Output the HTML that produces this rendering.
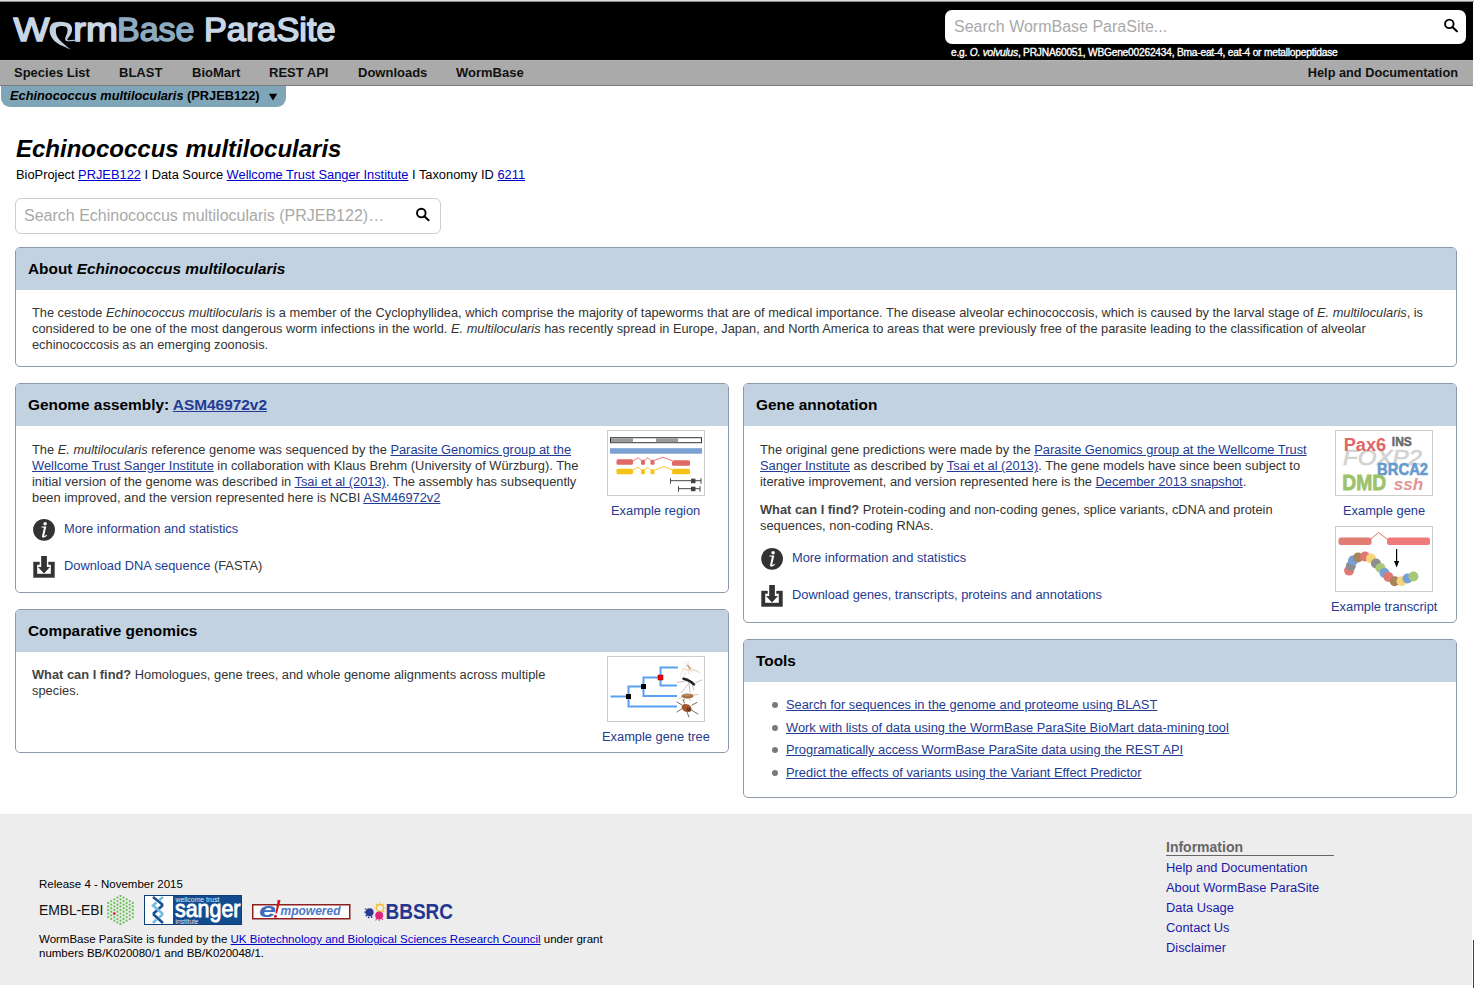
<!DOCTYPE html>
<html><head><meta charset="utf-8">
<style>
*{margin:0;padding:0;box-sizing:border-box}
html,body{width:1474px;height:988px;overflow:hidden;background:#fff}
body{font-family:"Liberation Sans",sans-serif;color:#000;position:relative}
.abs{position:absolute;white-space:nowrap}
a{color:#233b92;text-decoration:underline}
#topstrip{position:absolute;left:0;top:0;width:1474px;height:2px;background:linear-gradient(#dedddb 0,#dedddb 50%,#8c8c8c 50%,#8c8c8c 100%)}
#hdr{position:absolute;left:0;top:2px;width:1473px;height:58px;background:#000}
#nav{position:absolute;left:0;top:60px;width:1473px;height:26px;background:#aaa;border-top:1px solid #b4b4b4;border-bottom:1px solid #7a7a7a}
.nv{position:absolute;top:3.5px;font-weight:bold;font-size:13px;color:#111;line-height:16px}
#tab{position:absolute;left:1px;top:86px;width:285px;height:21px;background:#7fa5b9;border-radius:0 0 9px 9px}
#tab span.t{position:absolute;left:9px;top:2px;font-weight:bold;font-size:12.8px;line-height:16px;color:#000;white-space:nowrap}
.panel{position:absolute;border:1px solid #8c9aab;border-radius:5px;background:#fff;overflow:hidden}
.ph{height:42px;background:#c2d2e1;font-weight:bold;font-size:15.4px;line-height:42px;padding-left:12px;color:#000;white-space:nowrap}
.pb{font-size:12.8px;line-height:16px;color:#333}
.pb p{white-space:nowrap}
.txt{position:absolute;white-space:nowrap;font-size:12.85px;line-height:16px;color:#333}
.txt b{color:#454545}
.lk{position:absolute;white-space:nowrap;font-size:12.85px;line-height:16px;text-decoration:none}
.nu{text-decoration:none}
.ico{position:absolute}
.imgbox{position:absolute;width:98px;height:66px;border:1px solid #cdcdcd;background:#fff}
.li{position:absolute;left:786px;white-space:nowrap;font-size:12.85px;line-height:16px}
.ft{position:absolute;white-space:nowrap;font-size:11.5px;line-height:14px;color:#000}
.fl{position:absolute;left:1166px;white-space:nowrap;font-size:12.85px;line-height:16px;color:#1a1aa8}
.bul{position:absolute;left:-14.5px;top:4.5px;width:6px;height:6px;border-radius:50%;background:#7a7a7a}
</style></head><body>
<div id="topstrip"></div>
<div id="hdr"></div>
<svg style="position:absolute;left:0;top:0" width="350" height="60" viewBox="0 0 350 60">
 <defs><linearGradient id="wg" x1="0" y1="0" x2="1" y2="1"><stop offset="0" stop-color="#b5c8d8"/><stop offset="0.45" stop-color="#ccd9e5"/><stop offset="1" stop-color="#93adc2"/></linearGradient></defs>
 <g font-family="Liberation Sans" font-size="32.5" stroke-linejoin="round" stroke-linecap="round" stroke-width="1.5">
  <text x="13.5" y="41" fill="#c8d7e7" stroke="#c8d7e7" textLength="36" lengthAdjust="spacingAndGlyphs">W</text>
  <text x="73.2" y="41" fill="#c8d7e7" stroke="#c8d7e7" textLength="44.7" lengthAdjust="spacingAndGlyphs">rm</text>
  <text x="117" y="41" fill="#8eaac0" stroke="#8eaac0" textLength="77.5" lengthAdjust="spacingAndGlyphs">Base</text>
  <text x="204" y="41" fill="#c8d7e7" stroke="#c8d7e7" textLength="131.5" lengthAdjust="spacingAndGlyphs">ParaSite</text>
 </g>
 <path d="M70.8,49.7 C68,48.5 64,46.5 61.5,45.5 C57,43.5 52.5,40 50.5,35 C48.8,31 49.3,25 53.5,22.8 C59,21.2 67,21.5 70.5,24.8 C73.5,28.5 72,34 68.5,37.5 C67.2,38.8 66.8,40 68.2,40.2 C71,40.5 74,38.8 77.2,40.6 L76.8,41.2 C73.5,40.3 70.5,41.6 67.2,41.2 C65,40.8 64.6,38.6 65.8,36.4 C67.6,33 68.4,29 66.4,27 C63,25.3 59,25.8 56.3,27.8 C55.3,30.5 55.8,35 58,38 C61,42 66,45.5 70.8,49.7 Z" fill="url(#wg)"/>
</svg>
<div style="position:absolute;left:945px;top:10px;width:521px;height:33.5px;background:#fff;border-radius:7px"></div>
<div class="abs" style="left:954px;top:18px;font-size:16px;line-height:18px;color:#a9a9a9">Search WormBase ParaSite...</div>
<svg style="position:absolute;left:1441px;top:17px" width="18" height="18" viewBox="0 0 18 18"><circle cx="8.3" cy="6.9" r="4.25" fill="none" stroke="#000" stroke-width="1.9"/><path d="M11.4,10 L15.9,14.2" stroke="#000" stroke-width="2.1" stroke-linecap="round"/></svg>
<div class="abs" style="left:951px;top:47px;font-size:10.2px;line-height:12px;color:#fff;letter-spacing:-0.21px;-webkit-text-stroke:0.35px #fff">e.g. <i>O. volvulus</i>, PRJNA60051, WBGene00262434, Bma-eat-4, eat-4 or metallopeptidase</div>
<div id="nav">
  <span class="nv" style="left:14px">Species List</span>
  <span class="nv" style="left:119px">BLAST</span>
  <span class="nv" style="left:192px">BioMart</span>
  <span class="nv" style="left:269px">REST API</span>
  <span class="nv" style="left:358px">Downloads</span>
  <span class="nv" style="left:456px">WormBase</span>
  <span class="nv" style="right:15px;font-size:12.75px">Help and Documentation</span>
</div>
<div id="tab"><span class="t"><i>Echinococcus multilocularis</i> (PRJEB122)</span><svg style="position:absolute;left:267px;top:7px" width="10" height="8"><polygon points="0.8,0.8 9.2,0.8 5,7.6" fill="#000"/></svg></div>

<div class="abs" style="left:16px;top:134px;font-size:24px;font-weight:bold;font-style:italic;line-height:30px">Echinococcus multilocularis</div>
<div class="abs" style="left:16px;top:167px;font-size:12.85px;line-height:16px;color:#000">BioProject <a style="color:#0000cc" href="#">PRJEB122</a> I Data Source <a style="color:#0000cc" href="#">Wellcome Trust Sanger Institute</a> I Taxonomy ID <a style="color:#0000cc" href="#">6211</a></div>

<div style="position:absolute;left:15px;top:198px;width:426px;height:36px;border:1px solid #cfcfcf;border-radius:6px;background:#fff"></div>
<div class="abs" style="left:24px;top:207px;font-size:16px;line-height:18px;color:#a9a9a9">Search Echinococcus multilocularis (PRJEB122)…</div>
<svg style="position:absolute;left:413px;top:205px" width="18" height="18" viewBox="0 0 18 18"><circle cx="8.3" cy="8" r="4.3" fill="none" stroke="#000" stroke-width="1.9"/><path d="M11.3,11.2 L15.6,15.2" stroke="#000" stroke-width="2" stroke-linecap="round"/></svg>
<!-- About -->
<div class="panel" style="left:15px;top:247px;width:1442px;height:120px">
  <div class="ph">About <i>Echinococcus multilocularis</i></div>
  <div class="pb" style="padding:15px 0 0 16px">
   <p>The cestode <i>Echinococcus multilocularis</i> is a member of the Cyclophyllidea, which comprise the majority of tapeworms that are of medical importance. The disease alveolar echinococcosis, which is caused by the larval stage of <i>E. multilocularis</i>, is</p>
   <p>considered to be one of the most dangerous worm infections in the world. <i>E. multilocularis</i> has recently spread in Europe, Japan, and North America to areas that were previously free of the parasite leading to the classification of alveolar</p>
   <p>echinococcosis as an emerging zoonosis.</p>
  </div>
</div>

<!-- Genome assembly -->
<div class="panel" style="left:15px;top:383px;width:714px;height:210px">
  <div class="ph">Genome assembly: <a href="#">ASM46972v2</a></div>
</div>

<!-- Gene annotation -->
<div class="panel" style="left:743px;top:383px;width:714px;height:240px">
  <div class="ph">Gene annotation</div>
</div>

<!-- Comparative genomics -->
<div class="panel" style="left:15px;top:609px;width:714px;height:144px">
  <div class="ph">Comparative genomics</div>
</div>

<!-- Tools -->
<div class="panel" style="left:743px;top:639px;width:714px;height:159px">
  <div class="ph">Tools</div>
</div>

<!-- ===== Genome assembly content ===== -->
<div class="txt" style="left:32px;top:442px">The <i>E. multilocularis</i> reference genome was sequenced by the <a href="#">Parasite Genomics group at the</a><br><a href="#">Wellcome Trust Sanger Institute</a> in collaboration with Klaus Brehm (University of Würzburg). The<br>initial version of the genome was described in <a href="#">Tsai et al (2013)</a>. The assembly has subsequently<br>been improved, and the version represented here is NCBI <a href="#">ASM46972v2</a></div>
<div class="imgbox" style="left:607px;top:430px">
 <svg width="96" height="64" viewBox="1 0.8 96 64">
  <rect x="3.5" y="7.5" width="91" height="5" fill="#fff" stroke="#333" stroke-width="1"/>
  <rect x="4" y="8" width="22" height="4" fill="#999"/><rect x="49" y="8" width="22" height="4" fill="#999"/>
  <rect x="3" y="18" width="92" height="5.5" fill="#7ba0d2"/>
  <g fill="#e06a66"><rect x="9.5" y="29" width="16.5" height="5.5" rx="1.5"/><rect x="34" y="29.5" width="4" height="5" rx="1"/><rect x="43.5" y="29.5" width="4" height="5" rx="1"/><rect x="65" y="30" width="18" height="5.5" rx="1.5"/></g>
  <path d="M26,31 L31,27.5 L34,30 M38,30 L41,27.5 L43.5,30 M47.5,30 L56,27 L65,30.5" fill="none" stroke="#e06a66" stroke-width="0.9"/>
  <g fill="#f5c316"><rect x="9.5" y="38.5" width="16.5" height="5.5" rx="1.5"/><rect x="34" y="39" width="4" height="5" rx="1"/><rect x="43.5" y="39" width="4" height="5" rx="1"/><rect x="65" y="38.5" width="18" height="5.5" rx="1.5"/></g>
  <path d="M26,40 L31,37 L34,39.5 M38,39.5 L41,37 L43.5,39.5 M47.5,40 L57,36.5 L65,39.5" fill="none" stroke="#f5c316" stroke-width="0.9"/>
  <g fill="#444" stroke="#444"><path d="M63,50.5 L94,50.5" stroke-width="1"/><rect x="63" y="48" width="1" height="5.5" stroke="none"/><rect x="93.5" y="48" width="1" height="5.5" stroke="none"/><rect x="84" y="48.5" width="4.5" height="4.5" stroke="none"/>
  <path d="M71,58.5 L93,58.5" stroke-width="1"/><rect x="71" y="56" width="1" height="5.5" stroke="none"/><rect x="92.5" y="56" width="1" height="5.5" stroke="none"/><rect x="84" y="56.5" width="4.5" height="4.5" stroke="none"/></g>
 </svg>
</div>
<a class="lk" style="left:611px;top:503px" href="#">Example region</a>
<svg class="ico" style="left:32px;top:518px" width="24" height="24" viewBox="0 0 24 24"><circle cx="12.05" cy="11.8" r="10.9" fill="#333"/><circle cx="13.1" cy="5.8" r="1.75" fill="#fff"/><path d="M9.6,8.5 L14.3,8.5 L12.3,17.2 C12.1,18.1 12.7,18.3 14.9,16.8 L15.1,17.5 C13.6,19 11.9,19.8 10.9,19.6 C10.1,19.4 9.9,18.7 10.1,17.8 L11.8,10.4 C11.9,9.8 11.4,9.5 9.4,9.6 Z" fill="#fff"/></svg>
<a class="lk nu" style="left:64px;top:521px" href="#">More information and statistics</a>
<svg class="ico" style="left:32px;top:555px" width="24" height="24" viewBox="0 0 24 24"><path d="M1.5,7 L7.5,7 L7.5,9.6 L5,9.6 L5,19 L19,19 L19,9.6 L16.5,9.6 L16.5,7 L22.5,7 L22.5,22.5 L1.5,22.5 Z" fill="#333" stroke="#333" stroke-width="0.4" stroke-linejoin="round"/><rect x="9.2" y="1" width="5.7" height="11" fill="#333"/><path d="M6,12 L18,12 L12,18.5 Z" fill="#333"/></svg>
<div class="txt" style="left:64px;top:558px"><a class="nu" href="#">Download DNA sequence</a> (FASTA)</div>

<!-- ===== Gene annotation content ===== -->
<div class="txt" style="left:760px;top:442px">The original gene predictions were made by the <a href="#">Parasite Genomics group at the Wellcome Trust</a><br><a href="#">Sanger Institute</a> as described by <a href="#">Tsai et al (2013)</a>. The gene models have since been subject to<br>iterative improvement, and version represented here is the <a href="#">December 2013 snapshot</a>.</div>
<div class="txt" style="left:760px;top:502px"><b>What can I find?</b> Protein-coding and non-coding genes, splice variants, cDNA and protein<br>sequences, non-coding RNAs.</div>
<svg class="ico" style="left:760px;top:547px" width="24" height="24" viewBox="0 0 24 24"><circle cx="12.05" cy="11.8" r="10.9" fill="#333"/><circle cx="13.1" cy="5.8" r="1.75" fill="#fff"/><path d="M9.6,8.5 L14.3,8.5 L12.3,17.2 C12.1,18.1 12.7,18.3 14.9,16.8 L15.1,17.5 C13.6,19 11.9,19.8 10.9,19.6 C10.1,19.4 9.9,18.7 10.1,17.8 L11.8,10.4 C11.9,9.8 11.4,9.5 9.4,9.6 Z" fill="#fff"/></svg>
<a class="lk nu" style="left:792px;top:550px" href="#">More information and statistics</a>
<svg class="ico" style="left:760px;top:584px" width="24" height="24" viewBox="0 0 24 24"><path d="M1.5,7 L7.5,7 L7.5,9.6 L5,9.6 L5,19 L19,19 L19,9.6 L16.5,9.6 L16.5,7 L22.5,7 L22.5,22.5 L1.5,22.5 Z" fill="#333" stroke="#333" stroke-width="0.4" stroke-linejoin="round"/><rect x="9.2" y="1" width="5.7" height="11" fill="#333"/><path d="M6,12 L18,12 L12,18.5 Z" fill="#333"/></svg>
<a class="lk nu" style="left:792px;top:587px" href="#">Download genes, transcripts, proteins and annotations</a>
<div class="imgbox" style="left:1335px;top:430px">
 <svg width="96" height="64" viewBox="0 0 96 64" font-family="Liberation Sans">
  <text x="7" y="33.5" font-size="22.5" font-style="italic" fill="#d2d2d2" stroke="#d2d2d2" stroke-width="0.7" textLength="79" lengthAdjust="spacingAndGlyphs">FOXP2</text>
  <text x="7.7" y="19.8" font-size="17.5" font-weight="bold" fill="#e06666" textLength="42.5" lengthAdjust="spacingAndGlyphs">Pax6</text>
  <text x="55.8" y="14.7" font-size="13.4" font-weight="bold" fill="#6a6a6a" stroke="#6a6a6a" stroke-width="0.5" textLength="20" lengthAdjust="spacingAndGlyphs">INS</text>
  <text x="41.1" y="43.6" font-size="17" font-weight="bold" fill="#6699cc" stroke="#6699cc" stroke-width="0.6" textLength="51" lengthAdjust="spacingAndGlyphs">BRCA2</text>
  <text x="6.2" y="58.8" font-size="22.5" font-weight="bold" fill="#9dc36b" stroke="#9dc36b" stroke-width="0.8" textLength="44" lengthAdjust="spacingAndGlyphs">DMD</text>
  <text x="57.8" y="58.8" font-size="16" font-weight="bold" font-style="italic" fill="#e39494" textLength="29.5" lengthAdjust="spacingAndGlyphs">ssh</text>
 </svg>
</div>
<a class="lk" style="left:1343px;top:503px" href="#">Example gene</a>
<div class="imgbox" style="left:1335px;top:526px">
 <svg width="96" height="64" viewBox="0 0 96 64">
  <rect x="2.5" y="10.5" width="33" height="7.5" rx="2.5" fill="#e07c74"/>
  <rect x="51" y="10.5" width="43" height="7.5" rx="2.5" fill="#f07a7a"/>
  <path d="M35,12 L42.5,5.5 L51,12" fill="none" stroke="#e07068" stroke-width="1"/>
  <path d="M60.6,22 L60.6,38" stroke="#000" stroke-width="1.2"/><path d="M58,34 L63.2,34 L60.6,40.5 Z" fill="#000"/>
  <g>
   <circle cx="13.1" cy="43.6" r="5" fill="#e07872"/>
   <circle cx="14.8" cy="39" r="5" fill="#8e8e8e"/>
   <circle cx="17" cy="33.5" r="5" fill="#76a0d8"/>
   <circle cx="22" cy="30.5" r="5" fill="#a8835e"/>
   <circle cx="29" cy="29.5" r="5" fill="#e07872"/>
   <circle cx="35" cy="31.5" r="5" fill="#f5d47a"/>
   <circle cx="40" cy="36.5" r="5" fill="#8e8e8e"/>
   <circle cx="44.5" cy="41" r="5" fill="#a8c878"/>
   <circle cx="48.5" cy="46" r="5" fill="#76a0d8"/>
   <circle cx="52.5" cy="50" r="5" fill="#e07872"/>
   <circle cx="58.7" cy="54.2" r="5" fill="#a8835e"/>
   <circle cx="65.5" cy="54.2" r="5" fill="#f5d47a"/>
   <circle cx="71.5" cy="51.5" r="5" fill="#76a0d8"/>
   <circle cx="77.5" cy="49.5" r="5" fill="#a8c878"/>
  </g>
 </svg>
</div>
<a class="lk" style="left:1331px;top:599px" href="#">Example transcript</a>

<!-- ===== Comparative content ===== -->
<div class="txt" style="left:32px;top:667px"><b>What can I find?</b> Homologues, gene trees, and whole genome alignments across multiple<br>species.</div>
<div class="imgbox" style="left:607px;top:656px">
 <svg width="96" height="64" viewBox="0 0 96 64">
  <g fill="none" stroke="#5aa0f0" stroke-width="2">
   <path d="M2.5,39.5 L20.5,39.5"/>
   <path d="M36,29.5 L20.5,29.5 L20.5,49.5 L69,49.5"/>
   <path d="M52.5,20.5 L35.5,20.5 L35.5,39 L69,39"/>
   <path d="M70,10.5 L52.5,10.5 L52.5,28.5 L69,28.5"/>
  </g>
  <rect x="18" y="37" width="5" height="5" fill="#000"/>
  <rect x="33" y="27" width="5" height="5" fill="#000"/>
  <rect x="50" y="18" width="5" height="5" fill="#e00" stroke="#900" stroke-width="0.5"/>
  <g fill="none" stroke-linecap="round">
   <path d="M76,5 L84,15 M80,4 L81,17 M74,12 L90,14 M78,9 L72,18 M83,11 L92,16 M79,13 L76,19" stroke="#dcc6ae" stroke-width="0.6"/>
   <ellipse cx="81" cy="10" rx="3.2" ry="0.9" fill="#c9a888" stroke="none" transform="rotate(50 81 10)"/>
   <path d="M81,26 L73,36 M81,26 L82,36 M78,24 L69,25.5 M85,27 L94,23 M84,27 L86,33" stroke="#a09890" stroke-width="0.6"/>
   <path d="M75.5,21.8 C79,22.5 83,24.5 86,27.5" stroke="#231f1d" stroke-width="2.4"/>
   <path d="M74,40 L71,42 M85,38 L90,37.5 M77,41 L76,43.5 M81,41.5 L82,43.5" stroke="#c8a080" stroke-width="0.7"/>
   <ellipse cx="79.5" cy="39" rx="6" ry="2.6" fill="#9c6c48" stroke="none"/>
   <ellipse cx="79" cy="38.3" rx="4" ry="1.2" fill="#b8885e" stroke="none"/>
   <path d="M74,48 L69,45 M73.5,52 L69,55 M84,48 L89,45.5 M83.5,53 L90,57 M79,55 L81,60 M76.5,46 L75,42.5" stroke="#5a4434" stroke-width="0.8"/>
   <ellipse cx="78.6" cy="51" rx="5.2" ry="3.8" fill="#a5542e" stroke="none" transform="rotate(25 78.6 51)"/>
   <ellipse cx="80.8" cy="52.5" rx="2.4" ry="1.6" fill="#5a3a2a" stroke="none" transform="rotate(25 80.8 52.5)"/>
  </g>
 </svg>
</div>
<a class="lk" style="left:602px;top:729px" href="#">Example gene tree</a>

<!-- ===== Tools content ===== -->
<div class="tools">
 <div class="li" style="top:697px"><span class="bul"></span><a href="#">Search for sequences in the genome and proteome using BLAST</a></div>
 <div class="li" style="top:720px"><span class="bul"></span><a href="#">Work with lists of data using the WormBase ParaSite BioMart data-mining tool</a></div>
 <div class="li" style="top:742px"><span class="bul"></span><a href="#">Programatically access WormBase ParaSite data using the REST API</a></div>
 <div class="li" style="top:765px"><span class="bul"></span><a href="#">Predict the effects of variants using the Variant Effect Predictor</a></div>
</div>

<div id="footer" style="position:absolute;left:0;top:814px;width:1472px;height:171px;background:#ededed"></div>
<div style="position:absolute;left:1473px;top:940px;width:1px;height:48px;background:#1d4a7a"></div>
<div class="ft" style="left:39px;top:877px">Release 4 - November 2015</div>
<div class="abs" style="left:39px;top:901px;font-size:14px;line-height:18px;color:#111;letter-spacing:-0.15px">EMBL-EBI</div>
<svg style="position:absolute;left:107px;top:895px" width="27" height="30" viewBox="0 0 27 30"><g fill="#6fbf5e"><circle cx="1.2" cy="7.9" r="1.15"/><circle cx="1.2" cy="11.45" r="1.15"/><circle cx="1.2" cy="15.0" r="1.15"/><circle cx="1.2" cy="18.55" r="1.15"/><circle cx="1.2" cy="22.1" r="1.15"/><circle cx="4.28" cy="6.12" r="1.15"/><circle cx="4.28" cy="9.68" r="1.15"/><circle cx="4.28" cy="13.22" r="1.15"/><circle cx="4.28" cy="16.77" r="1.15"/><circle cx="4.28" cy="20.32" r="1.15"/><circle cx="4.28" cy="23.88" r="1.15"/><circle cx="7.35" cy="4.35" r="1.15"/><circle cx="7.35" cy="7.9" r="1.15"/><circle cx="7.35" cy="11.45" r="1.15"/><circle cx="7.35" cy="15.0" r="1.15"/><circle cx="7.35" cy="18.55" r="1.15"/><circle cx="7.35" cy="22.1" r="1.15"/><circle cx="7.35" cy="25.65" r="1.15"/><circle cx="10.43" cy="2.58" r="1.15"/><circle cx="10.43" cy="6.12" r="1.15"/><circle cx="10.43" cy="9.68" r="1.15"/><circle cx="10.43" cy="13.22" r="1.15"/><circle cx="10.43" cy="16.77" r="1.15"/><circle cx="10.43" cy="20.32" r="1.15"/><circle cx="10.43" cy="23.88" r="1.15"/><circle cx="10.43" cy="27.42" r="1.15"/><circle cx="13.5" cy="0.8" r="1.15"/><circle cx="13.5" cy="4.35" r="1.15"/><circle cx="13.5" cy="7.9" r="1.15"/><circle cx="13.5" cy="11.45" r="1.15"/><circle cx="13.5" cy="15.0" r="1.15"/><circle cx="13.5" cy="18.55" r="1.15"/><circle cx="13.5" cy="22.1" r="1.15"/><circle cx="13.5" cy="25.65" r="1.15"/><circle cx="13.5" cy="29.2" r="1.15"/><circle cx="16.57" cy="2.58" r="1.15"/><circle cx="16.57" cy="6.12" r="1.15"/><circle cx="16.57" cy="9.68" r="1.15"/><circle cx="16.57" cy="13.22" r="1.15"/><circle cx="16.57" cy="16.77" r="1.15"/><circle cx="16.57" cy="20.32" r="1.15"/><circle cx="16.57" cy="23.88" r="1.15"/><circle cx="16.57" cy="27.42" r="1.15"/><circle cx="19.65" cy="4.35" r="1.15"/><circle cx="19.65" cy="7.9" r="1.15"/><circle cx="19.65" cy="11.45" r="1.15"/><circle cx="19.65" cy="15.0" r="1.15"/><circle cx="19.65" cy="18.55" r="1.15"/><circle cx="19.65" cy="22.1" r="1.15"/><circle cx="19.65" cy="25.65" r="1.15"/><circle cx="22.72" cy="6.12" r="1.15"/><circle cx="22.72" cy="9.68" r="1.15"/><circle cx="22.72" cy="13.22" r="1.15"/><circle cx="22.72" cy="16.77" r="1.15"/><circle cx="22.72" cy="20.32" r="1.15"/><circle cx="22.72" cy="23.88" r="1.15"/><circle cx="25.8" cy="7.9" r="1.15"/><circle cx="25.8" cy="11.45" r="1.15"/><circle cx="25.8" cy="15.0" r="1.15"/><circle cx="25.8" cy="18.55" r="1.15"/><circle cx="25.8" cy="22.1" r="1.15"/></g><circle cx="7.3" cy="18.6" r="1.4" fill="#e2263b"/></svg>
<svg style="position:absolute;left:144px;top:895px" width="98" height="30" viewBox="0 0 98 30">
 <rect x="0.5" y="0.5" width="97" height="29" fill="#124c8e" stroke="#0d3f7a" stroke-width="1"/>
 <rect x="1" y="1" width="28" height="28" fill="#fff"/>
 <g fill="none" stroke-width="2.6" stroke-linecap="butt">
  <path d="M9,2 L19,10 M19,10 L9,19 M9,19 L19,28" stroke="#1b4f93"/>
  <path d="M19,2 L15,5.5 M12.5,7.5 L9,10.5 L19,19 M19,19 L15,22.5 M12.5,24.5 L9,28" stroke="#74bde0"/>
 </g>
 <text x="31.5" y="7" font-family="Liberation Sans" font-size="7" fill="#dfe9f4" textLength="44" lengthAdjust="spacingAndGlyphs">wellcome trust</text>
 <text x="31" y="21.8" font-family="Liberation Sans" font-size="24" fill="#fff" stroke="#fff" stroke-width="0.9" textLength="65.5" lengthAdjust="spacingAndGlyphs">sanger</text>
 <text x="31.5" y="28.5" font-family="Liberation Sans" font-size="6.5" fill="#dfe9f4" textLength="23" lengthAdjust="spacingAndGlyphs">institute</text>
</svg>
<svg style="position:absolute;left:252px;top:899px" width="100" height="22" viewBox="0 0 100 22">
 <rect x="0.75" y="5.75" width="97" height="14" fill="#fff" stroke="#8e2020" stroke-width="1.5"/>
 <text x="7" y="18" font-family="Liberation Sans" font-size="21" font-weight="bold" font-style="italic" fill="#3c6cc0" textLength="17" lengthAdjust="spacingAndGlyphs">e</text>
 <path d="M25.8,0.8 L28.6,1.2 L25,14.5 L23.4,14.3 Z" fill="#d0161c"/><circle cx="23.4" cy="17.3" r="1.5" fill="#d0161c"/>
 <text x="28.5" y="16.3" font-family="Liberation Sans" font-size="12" font-weight="bold" font-style="italic" fill="#4b79c8" textLength="60" lengthAdjust="spacingAndGlyphs">mpowered</text>
</svg>
<svg style="position:absolute;left:362px;top:900px" width="95" height="24" viewBox="0 0 95 24">
 <g fill="#2a3b93"><circle cx="7.6" cy="12.3" r="4"/><circle cx="3.4" cy="12.3" r="1"/><circle cx="4.3" cy="15.6" r="0.9"/><circle cx="6.6" cy="17.3" r="0.9"/><circle cx="9.6" cy="17" r="0.9"/><circle cx="3.6" cy="9" r="0.8"/></g>
 <g stroke="#f2b81a" stroke-width="1.1" fill="none"><circle cx="18" cy="8" r="3.4"/><path d="M18,2 L18,3.6 M23.8,8 L22.4,8 M22.2,3.8 L21,5 M13.8,3.8 L15,5 M22.2,12.2 L21,11 M12.2,8 L13.6,8"/></g>
 <circle cx="17.2" cy="15.4" r="4" fill="#e0257f"/><path d="M14.5,18.5 L13.8,20.5 M17.2,19.4 L17.2,21 M20,18.5 L20.8,20" stroke="#e0257f" stroke-width="1"/>
 <text x="23.5" y="19.4" font-family="Liberation Sans" font-size="22" font-weight="bold" fill="#24368f" textLength="67.5" lengthAdjust="spacingAndGlyphs">BBSRC</text>
</svg>
<div class="ft" style="left:39px;top:932px">WormBase ParaSite is funded by the <a style="color:#0000cc" href="#">UK Biotechnology and Biological Sciences Research Council</a> under grant<br>numbers BB/K020080/1 and BB/K020048/1.</div>

<div class="abs" style="left:1166px;top:839px;font-size:14px;line-height:17px;font-weight:bold;color:#666">Information</div>
<div style="position:absolute;left:1166px;top:854.5px;width:168px;height:1px;background:#666"></div>
<div class="fl" style="top:860px">Help and Documentation</div>
<div class="fl" style="top:880px">About WormBase ParaSite</div>
<div class="fl" style="top:900px">Data Usage</div>
<div class="fl" style="top:920px">Contact Us</div>
<div class="fl" style="top:940px">Disclaimer</div>
</body></html>
